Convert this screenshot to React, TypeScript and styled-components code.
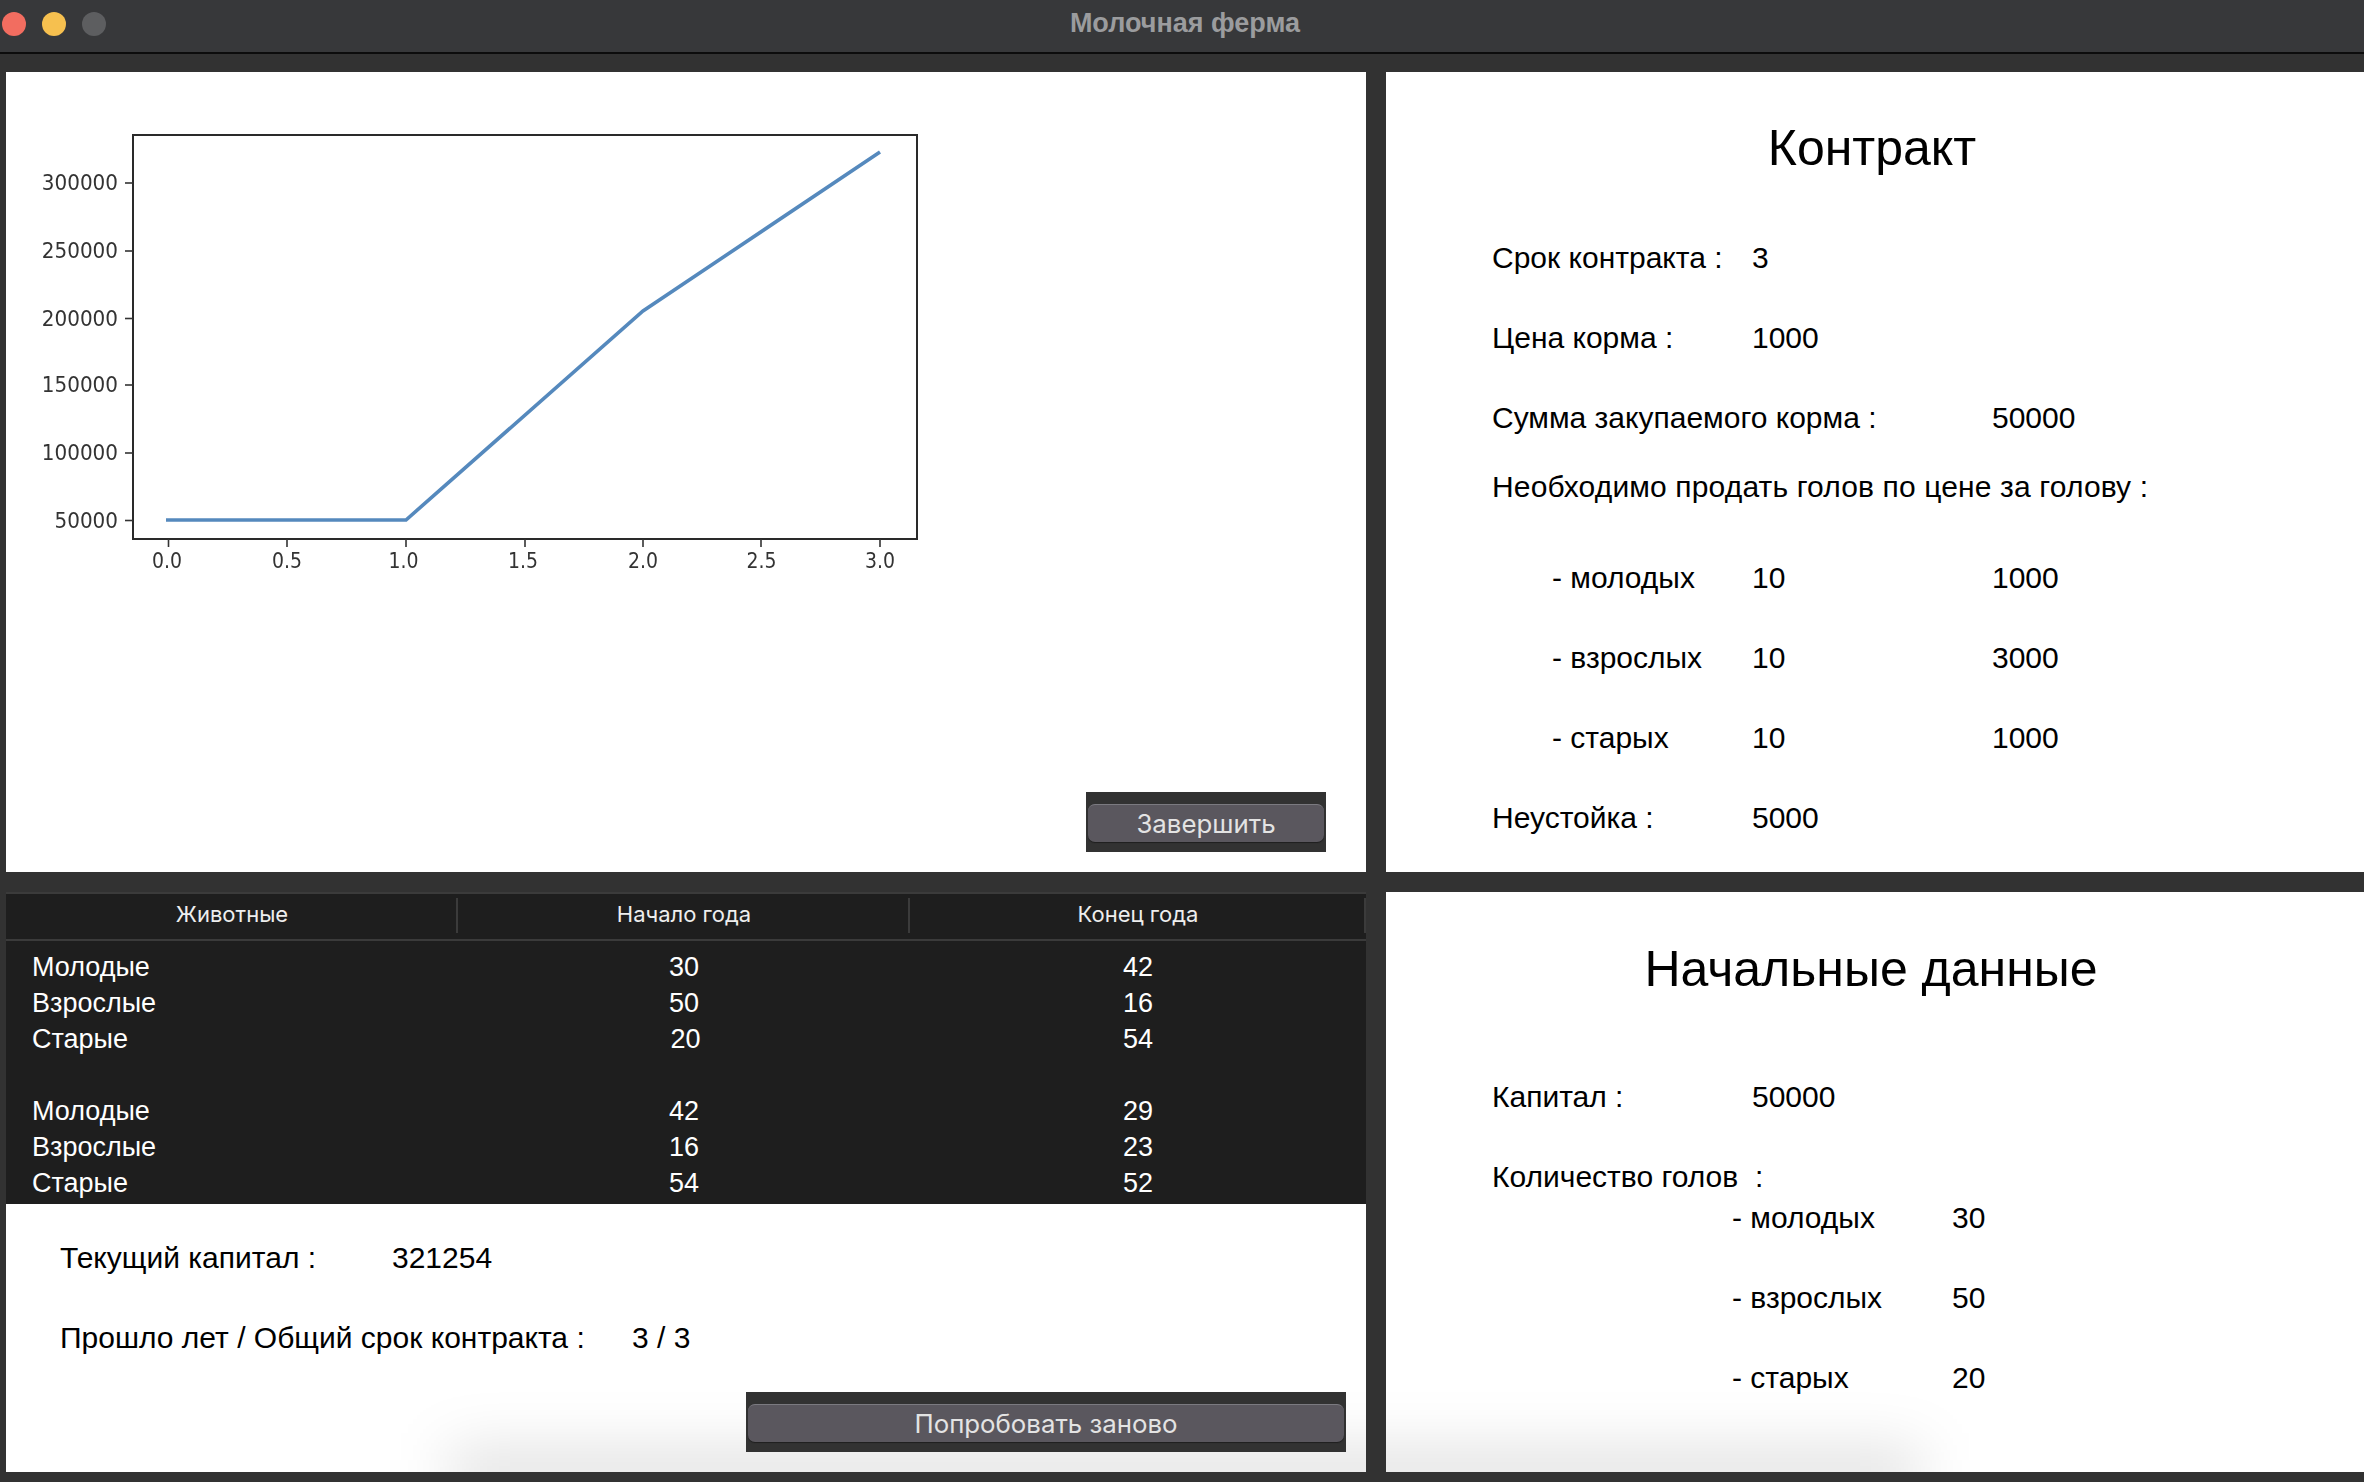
import React from "react";
import styled, { createGlobalStyle } from "styled-components";

const Global = createGlobalStyle`
  html, body { margin: 0; padding: 0; background: #323232; }
  body { font-family: "Liberation Sans", Arial, sans-serif; overflow: hidden; }
`;

const Window = styled.div`
  width: 2364px;
  height: 1482px;
  display: flex;
  flex-direction: column;
  background: #323232;
`;

const TitleBar = styled.header`
  position: relative;
  height: 52px;
  box-sizing: content-box;
  flex: none;
  display: flex;
  align-items: center;
  justify-content: center;
  background: #37383a;
  border-bottom: 2px solid #0c0c0c;
`;

const Lights = styled.div`
  position: absolute;
  left: 2px;
  top: 12px;
  display: flex;
  gap: 16px;
`;

const Light = styled.span<{ $color: string }>`
  width: 24px;
  height: 24px;
  border-radius: 50%;
  background: ${(p) => p.$color};
`;

const WindowTitle = styled.h1`
  margin: 0 0 5px 6px;
  font: 700 27px "Liberation Sans", Arial, sans-serif;
  color: #9b9c9e;
`;

const Desk = styled.main`
  flex: 1;
  display: grid;
  grid-template-columns: 1360px 978px;
  grid-template-rows: 800px 580px;
  column-gap: 20px;
  row-gap: 20px;
  padding: 18px 0 10px 6px;
`;

const Panel = styled.section`
  position: relative;
  display: flex;
  flex-direction: column;
  background: #fff;
  color: #000;
  overflow: hidden;
`;

const DockShadow = styled.div<{ $left: number }>`
  position: absolute;
  left: ${(p) => p.$left}px;
  width: 1470px;
  bottom: -24px;
  height: 44px;
  background: rgba(0, 0, 0, 0.14);
  filter: blur(30px);
  pointer-events: none;
`;

const ChartPanel = styled(Panel)`
  justify-content: space-between;
  padding-bottom: 20px;
`;

const ChartSvg = styled.svg`
  display: block;
  width: 1000px;
  height: 560px;
  flex: none;
  filter: blur(0.45px);
`;

const ButtonBar = styled.div<{ $width: number; $inset?: number }>`
  position: relative;
  z-index: 1;
  align-self: flex-end;
  width: ${(p) => p.$width}px;
  height: 60px;
  margin-right: ${(p) => p.$inset ?? 0}px;
  box-sizing: border-box;
  padding: 12px 2px 10px;
  background: #323232;
`;

const ActionButton = styled.button`
  display: block;
  width: 100%;
  height: 38px;
  padding: 0;
  border: none;
  border-top: 1px solid #7b7a80;
  border-radius: 7px;
  background: #5a575e;
  box-shadow: 0 1px 1px #1f1f1f;
  color: #e3e3e3;
  font: 400 25.8px Inter, "Liberation Sans", sans-serif;
  line-height: 35px;
`;

const ContractPanel = styled(Panel)`
  padding: 0 0 0 106px;
`;

const StartPanel = styled(Panel)`
  padding: 0 0 0 106px;
`;

const Heading = styled.h2<{ $height: number; $gap?: number; $shift?: number }>`
  margin: 0 0 ${(p) => p.$gap ?? 0}px -106px;
  padding-right: ${(p) => p.$shift ?? 6}px;
  height: ${(p) => p.$height}px;
  display: flex;
  align-items: center;
  justify-content: center;
  font: 400 50px "Liberation Sans", Arial, sans-serif;
`;

const Line = styled.div<{ $height?: number; $indent?: number; $columns?: string; $top?: number }>`
  height: ${(p) => p.$height ?? 80}px;
  margin-top: ${(p) => p.$top ?? 0}px;
  padding-left: ${(p) => p.$indent ?? 0}px;
  display: grid;
  grid-template-columns: ${(p) => p.$columns ?? "260px 240px 1fr"};
  align-items: center;
  font-size: 30px;
  white-space: pre;
`;

const WideText = styled.span`
  letter-spacing: 0.14px;
`;

const TableArea = styled.div`
  background: #1e1e1e;
  color: #fff;
  height: 312px;
  flex: none;
  border-top: 2px solid #3b3b3b;
  box-sizing: border-box;
`;

const TableHeader = styled.div`
  display: grid;
  grid-template-columns: 452px 452px 1fr;
  height: 47px;
  box-sizing: border-box;
  padding: 4px 0 6px;
  border-bottom: 2px solid #3b3b3b;
  margin-bottom: 8px;
`;

const HeaderCell = styled.div`
  display: flex;
  align-items: center;
  justify-content: center;
  padding-bottom: 3px;
  padding-left: 2px;
  border-right: 2px solid #3b3b3b;
  color: #eeeeee;
  font: 400 22px Inter, "Liberation Sans", sans-serif;
`;

const TableRow = styled.div`
  display: grid;
  grid-template-columns: 452px 452px 1fr;
  height: 36px;
  align-items: center;
  font-size: 27px;
`;

const NameCell = styled.div`
  padding-left: 26px;
`;

const NumCell = styled.div<{ $nudge?: number }>`
  text-align: center;
  padding-left: ${(p) => p.$nudge ?? 0}px;
`;

const Status = styled.div`
  padding-left: 54px;
  flex: 1;
`;

const StatusLine = styled.div<{ $columns: string; $top?: number }>`
  height: 80px;
  margin-top: ${(p) => p.$top ?? 0}px;
  display: grid;
  grid-template-columns: ${(p) => p.$columns};
  align-items: center;
  font-size: 30px;
  white-space: pre;
`;

const BottomButton = styled.div`
  display: flex;
  justify-content: flex-end;
  padding: 0 20px 20px 0;
`;

const yTicks: [number, string][] = [
  [183, "300000"],
  [251, "250000"],
  [318.5, "200000"],
  [385, "150000"],
  [453, "100000"],
  [520.5, "50000"],
];
const xTicks: [number, number, string][] = [
  [168.5, 167, "0.0"],
  [287, 287, "0.5"],
  [406, 403.5, "1.0"],
  [525, 523, "1.5"],
  [643, 643, "2.0"],
  [761, 761.5, "2.5"],
  [880, 880, "3.0"],
];

const Chart = () => (
  <ChartSvg viewBox="0 0 1000 560">
    <g transform="translate(-6 -72)">
      <rect x="133" y="135" width="784" height="404" fill="#fff" stroke="#2a2a2a" strokeWidth="2" />
      {yTicks.map(([y, t]) => (
        <g key={t}>
          <line x1="125" x2="133" y1={y} y2={y} stroke="#333" strokeWidth="1.6" />
          <text x="118" y={y + 7} textAnchor="end" fontFamily="DejaVu Sans" fontSize="21" fill="#333" textLength={t.length * 12.7} lengthAdjust="spacingAndGlyphs">
            {t}
          </text>
        </g>
      ))}
      {xTicks.map(([x, lx, t]) => (
        <g key={t}>
          <line x1={x} x2={x} y1="539" y2="547" stroke="#333" strokeWidth="1.6" />
          <text x={lx} y="568" textAnchor="middle" fontFamily="DejaVu Sans" fontSize="21" fill="#333" textLength="30" lengthAdjust="spacingAndGlyphs">
            {t}
          </text>
        </g>
      ))}
      <polyline points="166,520 406,520 643,311 880,152" fill="none" stroke="#5589bd" strokeWidth="3.6" />
    </g>
  </ChartSvg>
);

const rows: [string, string, string, number?][] = [
  ["Молодые", "30", "42"],
  ["Взрослые", "50", "16"],
  ["Старые", "20", "54", 3],
  ["\u00a0", "", ""],
  ["Молодые", "42", "29"],
  ["Взрослые", "16", "23"],
  ["Старые", "54", "52"],
];

export default function App() {
  return (
    <Window>
      <Global />
      <TitleBar>
        <Lights>
          <Light $color="#f26d60" />
          <Light $color="#f6c04f" />
          <Light $color="#5d5e60" />
        </Lights>
        <WindowTitle>Молочная ферма</WindowTitle>
      </TitleBar>
      <Desk>
        <ChartPanel>
          <Chart />
          <ButtonBar $width={240} $inset={40}>
            <ActionButton>Завершить</ActionButton>
          </ButtonBar>
        </ChartPanel>

        <ContractPanel>
          <Heading $height={152} $gap={-6}>Контракт</Heading>
          <Line>
            <span>Срок контракта :</span>
            <span>3</span>
          </Line>
          <Line>
            <span>Цена корма :</span>
            <span>1000</span>
          </Line>
          <Line $columns="500px 1fr">
            <span>Сумма закупаемого корма :</span>
            <span>50000</span>
          </Line>
          <Line $height={58} $columns="1fr">
            <WideText>Необходимо продать голов по цене за голову :</WideText>
          </Line>
          <Line $indent={60} $columns="200px 240px 1fr" $top={22}>
            <span>- молодых</span>
            <span>10</span>
            <span>1000</span>
          </Line>
          <Line $indent={60} $columns="200px 240px 1fr">
            <span>- взрослых</span>
            <span>10</span>
            <span>3000</span>
          </Line>
          <Line $indent={60} $columns="200px 240px 1fr">
            <span>- старых</span>
            <span>10</span>
            <span>1000</span>
          </Line>
          <Line>
            <span>Неустойка :</span>
            <span>5000</span>
          </Line>
        </ContractPanel>

        <Panel>
          <TableArea>
            <TableHeader>
              <HeaderCell>Животные</HeaderCell>
              <HeaderCell>Начало года</HeaderCell>
              <HeaderCell>Конец года</HeaderCell>
            </TableHeader>
            {rows.map((r, i) => (
              <TableRow key={i}>
                <NameCell>{r[0]}</NameCell>
                <NumCell $nudge={r[3]}>{r[1]}</NumCell>
                <NumCell>{r[2]}</NumCell>
              </TableRow>
            ))}
          </TableArea>
          <Status>
            <StatusLine $columns="332px 1fr" $top={14}>
              <span>Текущий капитал :</span>
              <span>321254</span>
            </StatusLine>
            <StatusLine $columns="572px 1fr">
              <span>Прошло лет / Общий срок контракта :</span>
              <span>3 / 3</span>
            </StatusLine>
          </Status>
          <BottomButton>
            <ButtonBar $width={600}>
              <ActionButton>Попробовать заново</ActionButton>
            </ButtonBar>
          </BottomButton>
          <DockShadow $left={444} />
        </Panel>

        <StartPanel>
          <Heading $height={154} $shift={8}>Начальные данные</Heading>
          <Line $top={11}>
            <span>Капитал :</span>
            <span>50000</span>
          </Line>
          <Line>
            <span>Количество голов  :</span>
          </Line>
          <Line $indent={240} $columns="220px 1fr" $top={-39}>
            <span>- молодых</span>
            <span>30</span>
          </Line>
          <Line $indent={240} $columns="220px 1fr">
            <span>- взрослых</span>
            <span>50</span>
          </Line>
          <Line $indent={240} $columns="220px 1fr">
            <span>- старых</span>
            <span>20</span>
          </Line>
          <DockShadow $left={-936} />
        </StartPanel>
      </Desk>
    </Window>
  );
}
